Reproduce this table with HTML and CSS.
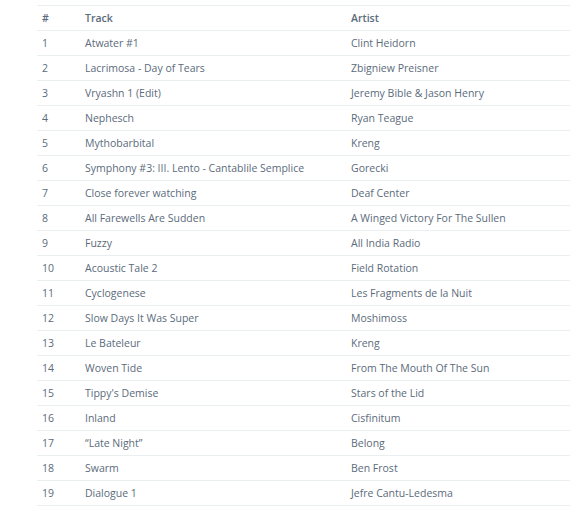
FILE: index.html
```html
<!DOCTYPE html>
<html>
<head>
<meta charset="utf-8">
<link rel="stylesheet" href="styles.css">
</head>
<body>
<div class="wrap">
<table class="tracks">
<thead>
<tr><th class="num">#</th><th class="track">Track</th><th class="artist">Artist</th></tr>
</thead>
<tbody>
<tr><td>1</td><td>Atwater #1</td><td>Clint Heidorn</td></tr>
<tr><td>2</td><td>Lacrimosa - Day of Tears</td><td>Zbigniew Preisner</td></tr>
<tr><td>3</td><td>Vryashn 1 (Edit)</td><td>Jeremy Bible &amp; Jason Henry</td></tr>
<tr><td>4</td><td>Nephesch</td><td>Ryan Teague</td></tr>
<tr><td>5</td><td>Mythobarbital</td><td>Kreng</td></tr>
<tr><td>6</td><td>Symphony #3: III. Lento - Cantablile Semplice</td><td>Gorecki</td></tr>
<tr><td>7</td><td>Close forever watching</td><td>Deaf Center</td></tr>
<tr><td>8</td><td>All Farewells Are Sudden</td><td>A Winged Victory For The Sullen</td></tr>
<tr><td>9</td><td>Fuzzy</td><td>All India Radio</td></tr>
<tr><td>10</td><td>Acoustic Tale 2</td><td>Field Rotation</td></tr>
<tr><td>11</td><td>Cyclogenese</td><td>Les Fragments de la Nuit</td></tr>
<tr><td>12</td><td>Slow Days It Was Super</td><td>Moshimoss</td></tr>
<tr><td>13</td><td>Le Bateleur</td><td>Kreng</td></tr>
<tr><td>14</td><td>Woven Tide</td><td>From The Mouth Of The Sun</td></tr>
<tr><td>15</td><td>Tippy's Demise</td><td>Stars of the Lid</td></tr>
<tr><td>16</td><td>Inland</td><td>Cisfinitum</td></tr>
<tr><td>17</td><td>“Late Night”</td><td>Belong</td></tr>
<tr><td>18</td><td>Swarm</td><td>Ben Frost</td></tr>
<tr><td>19</td><td>Dialogue 1</td><td>Jefre Cantu-Ledesma</td></tr>
</tbody>
</table>
</div>
</body>
</html>
```
FILE: styles.css
```css
html, body {
  margin: 0;
  padding: 0;
  background: #ffffff;
}
.wrap {
  padding: 5px 1px 0 37px;
}
.tracks {
  width: 533px;
  border-collapse: collapse;
  font-family: "Open Sans", "DejaVu Sans", sans-serif;
  font-size: 10.5px;
  color: #5b6b7b;
  border-top: 1px solid #e9eef0;
}
.tracks th, .tracks td {
  height: 24px;
  padding: 0 5px;
  text-align: left;
  vertical-align: middle;
  border-bottom: 1px solid #e9eef0;
  line-height: 14px;
}
.tracks th {
  font-weight: 600;
}
.tracks .num {
  width: 33px;
}
.tracks .track {
  width: 256px;
}
```
